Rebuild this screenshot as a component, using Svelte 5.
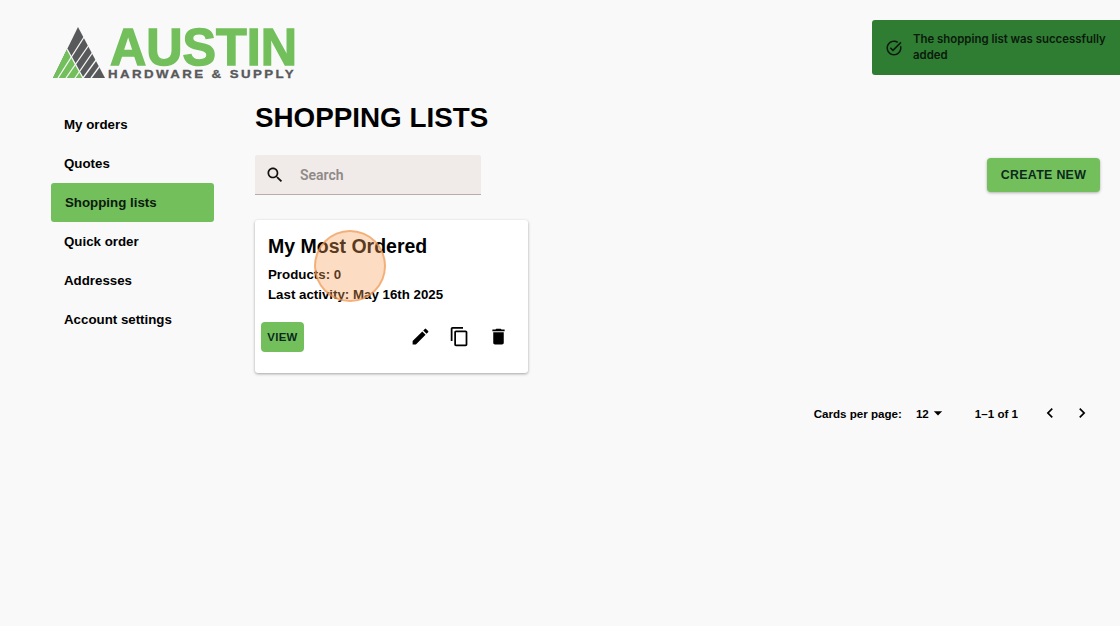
<script lang="ts">
  const navItems = ['My orders', 'Quotes', 'Shopping lists', 'Quick order', 'Addresses', 'Account settings'];
  const active = 'Shopping lists';

  // Material icon paths
  const icons = {
    search: 'M15.5 14h-.79l-.28-.27C15.41 12.59 16 11.11 16 9.5 16 5.91 13.09 3 9.5 3S3 5.91 3 9.5 5.91 16 9.5 16c1.61 0 3.09-.59 4.23-1.57l.27.28v.79l5 4.99L20.49 19l-4.99-5zm-6 0C7.01 14 5 11.99 5 9.5S7.01 5 9.5 5 14 7.01 14 9.5 11.99 14 9.5 14z',
    edit: 'M3 17.25V21h3.75L17.81 9.94l-3.75-3.75L3 17.25zM20.71 7.04c.39-.39.39-1.02 0-1.41l-2.34-2.34a.9959.9959 0 0 0-1.41 0l-1.83 1.83 3.75 3.75 1.83-1.83z',
    copy: 'M16 1H4c-1.1 0-2 .9-2 2v14h2V3h12V1zm3 4H8c-1.1 0-2 .9-2 2v14c0 1.1.9 2 2 2h11c1.1 0 2-.9 2-2V7c0-1.1-.9-2-2-2zm0 16H8V7h11v14z',
    trash: 'M6 19c0 1.1.9 2 2 2h8c1.1 0 2-.9 2-2V7H6v12zM19 4h-3.5l-1-1h-5l-1 1H5v2h14V4z',
    left: 'M15.41 7.41 14 6l-6 6 6 6 1.41-1.41L10.83 12z',
    right: 'M10 6 8.59 7.41 13.17 12l-4.58 4.59L10 18l6-6z',
    drop: 'M7 10l5 5 5-5z',
    check: 'M22 5.18 10.59 16.6l-4.24-4.24 1.41-1.41 2.83 2.83 10-10L22 5.18zm-2.21 5.04c.13.57.21 1.17.21 1.78 0 4.42-3.58 8-8 8s-8-3.58-8-8 3.58-8 8-8c1.58 0 3.04.46 4.28 1.25l1.44-1.44C16.1 2.67 14.13 2 12 2 6.48 2 2 6.48 2 12s4.48 10 10 10 10-4.48 10-10c0-1.19-.22-2.33-.6-3.39l-1.61 1.61z'
  };
</script>

{#snippet icon(d, size)}
  <svg width={size} height={size} viewBox="0 0 24 24" fill="currentColor" aria-hidden="true"><path {d} /></svg>
{/snippet}

<div class="page">
  <header class="header">
    <svg class="logo" width="250" height="70" viewBox="0 -10 250 70" role="img" aria-label="Austin Hardware & Supply">
      <polygon points="26,2 53,53 1,53" fill="#58595b" />
      <polygon points="15,24 31,53 1,53" fill="#72bf5c" />
      <g stroke="#f9f9f9" stroke-width="1.3">
        <line x1="14" y1="53" x2="39" y2="17" />
        <line x1="23" y1="53" x2="43" y2="24" />
        <line x1="31" y1="53" x2="47" y2="31" />
        <line x1="39" y1="53" x2="50" y2="38" />
        <line x1="6" y1="53" x2="34" y2="9" />
        <line x1="15" y1="24" x2="31" y2="53" />
      </g>
      <text x="58" y="40" textLength="187" lengthAdjust="spacingAndGlyphs" class="logo-big">AUSTIN</text>
      <text x="56" y="52.5" textLength="188" lengthAdjust="spacingAndGlyphs" class="logo-small">HARDWARE &amp; SUPPLY</text>
    </svg>
  </header>

  <div class="layout">
    <nav class="nav">
      {#each navItems as item}
        <a class="nav-item" class:active={item === active} href="#top">{item}</a>
      {/each}
    </nav>

    <main class="main">
      <h1 class="title">SHOPPING LISTS</h1>

      <div class="toolbar">
        <div class="search">
          <span class="search-icon">{@render icon(icons.search, 20)}</span>
          <span class="search-text">Search</span>
        </div>
        <button class="create">CREATE NEW</button>
      </div>

      <section class="card">
        <h2 class="card-title">My Most Ordered</h2>
        <p class="card-line">Products: 0</p>
        <p class="card-line">Last activity: May 16th 2025</p>
        <div class="card-actions">
          <button class="view">VIEW</button>
          <div class="card-icons">
            {@render icon(icons.edit, 21)}
            {@render icon(icons.copy, 21)}
            {@render icon(icons.trash, 21)}
          </div>
        </div>
      </section>

      <div class="pager">
        <span class="pager-label">Cards per page:</span>
        <span class="pager-select">12 <span class="pager-drop">{@render icon(icons.drop, 20)}</span></span>
        <span class="pager-range">1–1 of 1</span>
        <span class="pager-arrows">
          {@render icon(icons.left, 20)}
          {@render icon(icons.right, 20)}
        </span>
      </div>
    </main>
  </div>

  <div class="toast">
    <span class="toast-icon">{@render icon(icons.check, 18)}</span>
    <span class="toast-text">The shopping list was successfully added</span>
  </div>

  <div class="click-marker"></div>
</div>

<style>
  :global(body) {
    margin: 0;
    background: #f9f9f9;
  }

  .page {
    position: relative;
    width: 1120px;
    height: 626px;
    overflow: hidden;
    background: #f9f9f9;
    color: #000;
    font-family: "Liberation Sans", Arial, sans-serif;
    font-weight: 700;
  }

  .header {
    height: 104px;
    padding: 15px 0 0 52px;
    box-sizing: border-box;
  }

  .logo {
    display: block;
  }

  .logo-big {
    font: 700 51px "Liberation Sans", sans-serif;
    fill: #72bf5c;
    stroke: #72bf5c;
    stroke-width: 1.4px;
  }

  .logo-small {
    font: 700 11px "Liberation Sans", sans-serif;
    letter-spacing: 2px;
    fill: #58595b;
    stroke: #58595b;
    stroke-width: 0.3px;
  }

  .layout {
    display: grid;
    grid-template-columns: 163px 1fr;
    column-gap: 41px;
    padding: 0 20px 0 51px;
  }

  .nav {
    display: flex;
    flex-direction: column;
    margin-top: 1px;
  }

  .nav-item {
    height: 39px;
    box-sizing: border-box;
    padding: 0 0 1px 13px;
    display: flex;
    align-items: center;
    border-radius: 3px;
    font-size: 13.3px;
    color: #000;
    text-decoration: none;
  }

  .nav-item.active {
    background: #72bf5c;
    padding-left: 14px;
    color: #0c1a0c;
  }

  .title {
    margin: 0;
    height: 51px;
    font-size: 27.8px;
    line-height: 28px;
    font-weight: 700;
  }

  .toolbar {
    display: flex;
    align-items: center;
    justify-content: space-between;
    height: 40px;
  }

  .search {
    width: 226px;
    height: 40px;
    box-sizing: border-box;
    display: flex;
    align-items: center;
    background: #f0ebe8;
    border-bottom: 1px solid #b5aeaa;
    border-radius: 2px 2px 0 0;
  }

  .search-icon {
    display: flex;
    margin-left: 10px;
    color: #111;
  }

  .search-text {
    margin-left: 15px;
    font-family: Roboto, sans-serif;
    font-size: 14px;
    font-weight: 600;
    color: #8f8a87;
  }

  .create {
    width: 113px;
    height: 34px;
    padding: 0;
    border: 0;
    border-radius: 4px;
    background: #72bf5c;
    color: #0c2a1c;
    font: 700 12.4px "Liberation Sans", sans-serif;
    letter-spacing: 0.3px;
    box-shadow: 0 1px 3px rgba(0, 0, 0, 0.3);
  }

  .card {
    width: 273px;
    height: 153px;
    box-sizing: border-box;
    margin-top: 25px;
    padding: 13px 7px 0 13px;
    background: #fff;
    border-radius: 3px;
    box-shadow: 0 1px 3px rgba(0, 0, 0, 0.35);
  }

  .card-title {
    margin: 0 0 6px;
    font-size: 19.5px;
    line-height: 26px;
    font-weight: 700;
  }

  .card-line {
    margin: 0;
    font-size: 13.3px;
    line-height: 20px;
  }

  .card-actions {
    display: flex;
    align-items: center;
    justify-content: space-between;
    margin: 17px 0 0 -7px;
  }

  .view {
    width: 43px;
    height: 30px;
    padding: 0;
    border: 0;
    border-radius: 4px;
    background: #72bf5c;
    color: #0c2a1c;
    font: 700 11.4px "Liberation Sans", sans-serif;
    letter-spacing: 0.3px;
  }

  .card-icons {
    display: flex;
    gap: 18px;
    margin: -1px 12px 0 0;
  }

  .card-icons :global(svg) {
    display: block;
  }

  .pager {
    display: flex;
    align-items: center;
    justify-content: flex-end;
    height: 20px;
    margin-top: 30px;
    font-size: 11.6px;
  }

  .pager-select {
    display: flex;
    align-items: center;
    margin-left: 14px;
  }

  .pager-drop {
    display: flex;
    margin-left: -1px;
  }

  .pager-range {
    margin-left: 27px;
  }

  .pager-arrows {
    display: flex;
    gap: 12px;
    margin-left: 22px;
    margin-right: 8px;
  }

  .toast {
    position: absolute;
    top: 20px;
    right: 0;
    width: 248px;
    height: 55px;
    box-sizing: border-box;
    display: flex;
    align-items: center;
    padding: 0 10px 2px 13px;
    background: #2e7d32;
    border-radius: 3px 0 0 3px;
    color: #0b1a0c;
  }

  .toast-icon {
    display: flex;
    margin: 2px 10px 0 0;
  }

  .toast-text {
    font-family: Inter, sans-serif;
    font-size: 11.4px;
    font-weight: 600;
    line-height: 16px;
  }

  .click-marker {
    position: absolute;
    left: 314px;
    top: 230px;
    width: 72px;
    height: 72px;
    box-sizing: border-box;
    border-radius: 50%;
    background: rgba(247, 160, 90, 0.36);
    border: 2px solid rgba(240, 150, 80, 0.65);
  }
</style>
